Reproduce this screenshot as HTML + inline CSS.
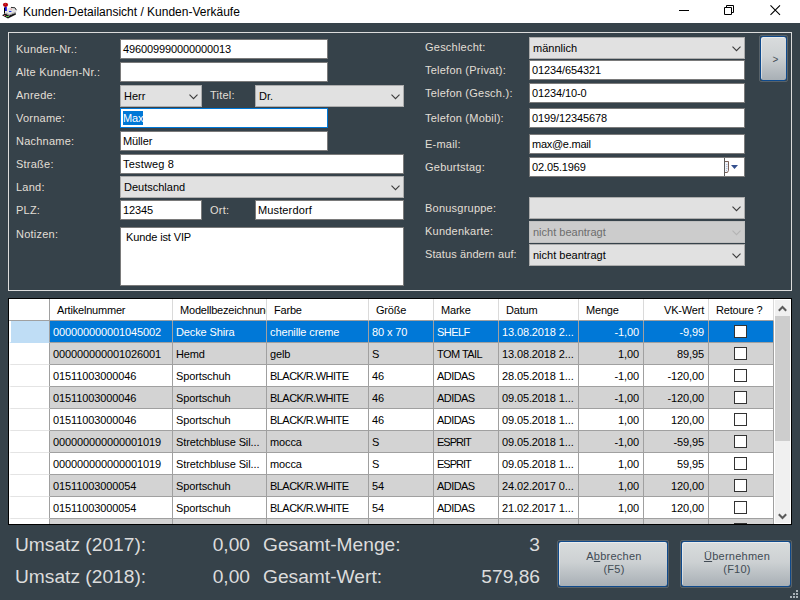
<!DOCTYPE html>
<html lang="de">
<head>
<meta charset="utf-8">
<title>Kunden-Detailansicht / Kunden-Verkäufe</title>
<style>
*{box-sizing:border-box;margin:0;padding:0}
html,body{width:800px;height:600px;overflow:hidden}
body{background:#36424a;font-family:"Liberation Sans",sans-serif;font-size:11px;color:#000;position:relative}
.abs{position:absolute}
#titlebar{position:absolute;left:0;top:0;width:800px;height:23px;background:#fff}
#title{position:absolute;left:23px;top:5px;font-size:12px;line-height:14px;color:#000;white-space:nowrap;letter-spacing:0}
#panel{position:absolute;left:8px;top:32px;width:784px;height:259px;border:1px solid #dcdcdc}
.lbl{position:absolute;color:#e2dfd6;font-size:11px;line-height:13px;white-space:nowrap;letter-spacing:.23px}
.inp{letter-spacing:-.12px;position:absolute;background:#fff;border:1px solid #7a7a7a;height:20px;font-size:11px;line-height:13px;padding:3px 0 0 2px;white-space:nowrap;overflow:hidden}
.cmb{position:absolute;background:#e1e1e1;border:1px solid #adadad;height:22px;font-size:11px;line-height:13px;padding:4px 0 0 3px;white-space:nowrap;overflow:hidden}
.cmb.dis{background:#cccccc;border-color:#bfbfbf;color:#6d6d6d}
.cmb svg{position:absolute;right:3.5px;top:8px}

.btn{position:absolute;border:1px solid #59636a;border-radius:2px}
.btni{position:absolute;left:0;top:0;right:0;bottom:0;border:1px solid #0f4a8c;border-radius:3px;background:linear-gradient(#d9dcdd,#cdd1d3 45%,#a8afb5);box-shadow:inset 1px 1px 0 rgba(255,255,255,.45);text-align:center;color:#414b54;font-size:11px;line-height:13px;letter-spacing:.25px}
.wc{position:absolute;top:0}

#grid{position:absolute;left:8px;top:298px;width:784px;height:227px;border:1px solid #000;background:#fff;overflow:hidden;font-size:11px}
.gh,.gr{height:22px;white-space:nowrap;display:flex}
.c{height:22px;border-right:1px solid #a0a0a0;border-bottom:1px solid #a0a0a0;line-height:13px;padding:5px 0 0 3px;overflow:hidden;white-space:nowrap;flex:none;letter-spacing:-.12px}
.c.u{letter-spacing:-.55px}
.c.u2{letter-spacing:-1px}
.gh .c{padding-left:7px;letter-spacing:-.2px;border-right-color:#dadada}
.gh .c.rh{border-right-color:#a0a0a0}
.c.rh{width:41px;background:#fff}
.gr .c.rh{border-bottom-color:#e4e4e4;border-left:2px solid #fff}
.c.r{text-align:right;padding-right:4px}
.gh .c.r{padding-right:4px}
.gr.alt .c{background:#d3d3d3}
.gr.alt .c.rh{background:#fff}
.gr.sel .c{background:#0078d7;color:#fff}
.gr.sel .c.rh{background:#bfddf5;border-bottom-color:#bfddf5}
.c.cb{padding:4px 0 0 25px;text-align:left}
.c.cb i{display:block;width:13px;height:13px;border:1px solid #333;background:#fff}
#sb{position:absolute;left:765px;top:0;width:17px;height:225px;background:#f0f0f0;border:1px solid #fff}
#thumb{position:absolute;left:0;top:16px;width:15px;height:125px;background:#cdcdcd}
.big{position:absolute;color:#dcdcdc;font-size:19.2px;line-height:22px;white-space:nowrap}
.big.r{text-align:right}
</style>
</head>
<body>
<div id="titlebar">
  <svg class="abs" style="left:0;top:0" width="20" height="22" viewBox="0 0 20 22">
    <path d="M2 15.2 L5 13.5 L15.5 13 L16 14.6 L8 18.4 L7 18 Z" fill="#151515"/>
    <path d="M5 9.5 L11.5 7 L16.5 9.6 L16.3 12.6 L9 15.6 L5 13.2 Z" fill="#e2e2e2"/>
    <path d="M6 12.5 L9.3 14.4 L15.8 11.8 L15.8 12.8 L9.2 15.6 L5.5 13.4 Z" fill="#9a9a9a"/>
    <path d="M11 7.4 L15 7.8 L16.4 10.2" stroke="#2a2a2a" stroke-width="1" fill="none"/>
    <rect x="4.6" y="6.6" width="2.2" height="4.4" fill="#1212d8"/>
    <rect x="4" y="7.6" width="1" height="6" fill="#000"/>
    <ellipse cx="5.5" cy="4.8" rx="2.6" ry="2.1" fill="#b8000c"/>
    <rect x="4.6" y="3.6" width="1.4" height="1" fill="#e24a4a"/>
    <rect x="6" y="16" width="3" height="1" fill="#58b048"/>
    <rect x="4" y="15" width="1.4" height="1" fill="#e06060"/>
    <rect x="9" y="11" width="2.4" height="1" fill="#2436e6"/>
    <rect x="10.6" y="8.6" width="1" height="1" fill="#e06060"/>
  </svg>
  <div id="title">Kunden-Detailansicht / Kunden-Verkäufe</div>
  <svg class="wc" style="left:676px" width="124" height="23" viewBox="0 0 124 23">
    <path d="M3 10.5 H13" stroke="#000" stroke-width="1" fill="none"/>
    <path d="M48.5 7.5 H55.5 V14.5 H48.5 Z M50.5 7.5 V5.5 H57.5 V12.5 H55.5" stroke="#000" stroke-width="1" fill="none"/>
    <path d="M94.5 5.3 L104 14.8 M104 5.3 L94.5 14.8" stroke="#000" stroke-width="1.1" fill="none"/>
  </svg>
</div>
<div id="panel"></div>

<!-- left column -->
<div class="lbl" style="left:16px;top:43px">Kunden-Nr.:</div>
<div class="inp" style="left:120px;top:39px;width:208px">496009990000000013</div>
<div class="lbl" style="left:16px;top:66px">Alte Kunden-Nr.:</div>
<div class="inp" style="left:120px;top:62px;width:208px"></div>
<div class="lbl" style="left:16px;top:89px">Anrede:</div>
<div class="cmb" style="left:120px;top:85px;width:82px">Herr<svg width="9" height="6" viewBox="0 0 9 6"><path d="M0.5 0.6 L4.5 4.6 L8.5 0.6" fill="none" stroke="#3b3b3b" stroke-width="1.1"/></svg></div>
<div class="lbl" style="left:210px;top:89px">Titel:</div>
<div class="cmb" style="left:255px;top:85px;width:149px">Dr.<svg width="9" height="6" viewBox="0 0 9 6"><path d="M0.5 0.6 L4.5 4.6 L8.5 0.6" fill="none" stroke="#3b3b3b" stroke-width="1.1"/></svg></div>
<div class="lbl" style="left:16px;top:112px">Vorname:</div>
<div class="inp" style="left:120px;top:108px;width:208px;border-color:#0078d7"><span style="background:#0078d7;color:#fff;display:inline-block;height:14px;margin-top:-1px;padding-top:1px;line-height:13px">Max</span></div>
<div class="lbl" style="left:16px;top:135px">Nachname:</div>
<div class="inp" style="left:120px;top:131px;width:208px">Müller</div>
<div class="lbl" style="left:16px;top:158px">Straße:</div>
<div class="inp" style="left:120px;top:154px;width:284px;letter-spacing:.18px">Testweg 8</div>
<div class="lbl" style="left:16px;top:181px">Land:</div>
<div class="cmb" style="left:120px;top:176px;width:284px">Deutschland<svg width="9" height="6" viewBox="0 0 9 6"><path d="M0.5 0.6 L4.5 4.6 L8.5 0.6" fill="none" stroke="#3b3b3b" stroke-width="1.1"/></svg></div>
<div class="lbl" style="left:16px;top:204px">PLZ:</div>
<div class="inp" style="left:120px;top:200px;width:82px">12345</div>
<div class="lbl" style="left:210px;top:204px">Ort:</div>
<div class="inp" style="left:255px;top:200px;width:149px;letter-spacing:.13px">Musterdorf</div>
<div class="lbl" style="left:16px;top:228px">Notizen:</div>
<div class="inp" style="left:120px;top:227px;width:284px;height:59px;padding:3px 0 0 5px">Kunde ist VIP</div>

<!-- right column -->
<div class="lbl" style="left:425px;top:41px">Geschlecht:</div>
<div class="cmb" style="left:529px;top:37px;width:216px">männlich<svg width="9" height="6" viewBox="0 0 9 6"><path d="M0.5 0.6 L4.5 4.6 L8.5 0.6" fill="none" stroke="#3b3b3b" stroke-width="1.1"/></svg></div>
<div class="lbl" style="left:425px;top:64px">Telefon (Privat):</div>
<div class="inp" style="left:529px;top:60px;width:216px">01234/654321</div>
<div class="lbl" style="left:425px;top:87px">Telefon (Gesch.):</div>
<div class="inp" style="left:529px;top:83px;width:216px">01234/10-0</div>
<div class="lbl" style="left:425px;top:112px">Telefon (Mobil):</div>
<div class="inp" style="left:529px;top:108px;width:216px">0199/12345678</div>
<div class="lbl" style="left:425px;top:138px">E-mail:</div>
<div class="inp" style="left:529px;top:134px;width:216px;letter-spacing:-.27px">max@e.mail</div>
<div class="lbl" style="left:425px;top:161px">Geburtstag:</div>
<div class="inp" style="left:529px;top:157px;width:216px">02.05.1969
  <div class="abs" style="left:194px;top:0;width:1px;height:18px;background:#5c5c5c"></div>
  <svg class="abs" style="left:195px;top:3px" width="5" height="13" viewBox="0 0 5 13"><path d="M0 0.5 H3.5 V9.6 L2.4 11.5 H0" fill="#eef1f7" stroke="#7a6158" stroke-width="1"/><path d="M1 3.5 H2.5 M1 5.5 H2.5 M1 7.5 H2.5 M1 9.5 H2" stroke="#b4c0d8" stroke-width="1"/></svg>
  <svg class="abs" style="left:201px;top:7px" width="7" height="4" viewBox="0 0 7 4"><path d="M0 0 H7 L3.5 4 Z" fill="#34508e"/></svg>
</div>
<div class="lbl" style="left:425px;top:202px">Bonusgruppe:</div>
<div class="cmb" style="left:529px;top:197px;width:216px"><svg width="9" height="6" viewBox="0 0 9 6"><path d="M0.5 0.6 L4.5 4.6 L8.5 0.6" fill="none" stroke="#3b3b3b" stroke-width="1.1"/></svg></div>
<div class="lbl" style="left:425px;top:225px">Kundenkarte:</div>
<div class="cmb dis" style="left:529px;top:221px;width:216px">nicht beantragt<svg width="9" height="6" viewBox="0 0 9 6"><path d="M0.5 0.6 L4.5 4.6 L8.5 0.6" fill="none" stroke="#b4b4b4" stroke-width="1.1"/></svg></div>
<div class="lbl" style="left:425px;top:248px;letter-spacing:.1px">Status ändern auf:</div>
<div class="cmb" style="left:529px;top:244px;width:216px">nicht beantragt<svg width="9" height="6" viewBox="0 0 9 6"><path d="M0.5 0.6 L4.5 4.6 L8.5 0.6" fill="none" stroke="#3b3b3b" stroke-width="1.1"/></svg></div>

<!-- > button -->
<div class="btn" style="left:759px;top:35px;width:29px;height:47px"><div class="btni"><span style="position:relative;top:16px;left:2px;font-size:10px">&gt;</span></div></div>

<!-- grid -->
<div id="grid">
<div class="gh"><div class="c rh"></div><div class="c" style="width:123px">Artikelnummer</div><div class="c" style="width:94px">Modellbezeichnung</div><div class="c" style="width:102px">Farbe</div><div class="c" style="width:65px">Größe</div><div class="c" style="width:65px">Marke</div><div class="c" style="width:80px">Datum</div><div class="c" style="width:65px">Menge</div><div class="c r" style="width:65px">VK-Wert</div><div class="c" style="width:65px">Retoure ?</div></div>
<div class="gr sel"><div class="c rh"></div><div class="c" style="width:123px">000000000001045002</div><div class="c" style="width:94px">Decke Shira</div><div class="c" style="width:102px">chenille creme</div><div class="c" style="width:65px">80 x 70</div><div class="c u" style="width:65px">SHELF</div><div class="c" style="width:80px">13.08.2018 2...</div><div class="c r" style="width:65px">-1,00</div><div class="c r" style="width:65px">-9,99</div><div class="c cb" style="width:65px"><i></i></div></div>
<div class="gr alt"><div class="c rh"></div><div class="c" style="width:123px">000000000001026001</div><div class="c" style="width:94px">Hemd</div><div class="c" style="width:102px">gelb</div><div class="c" style="width:65px">S</div><div class="c u" style="width:65px">TOM TAIL</div><div class="c" style="width:80px">13.08.2018 2...</div><div class="c r" style="width:65px">1,00</div><div class="c r" style="width:65px">89,95</div><div class="c cb" style="width:65px"><i></i></div></div>
<div class="gr"><div class="c rh"></div><div class="c" style="width:123px">01511003000046</div><div class="c" style="width:94px">Sportschuh</div><div class="c u" style="width:102px">BLACK/R.WHITE</div><div class="c" style="width:65px">46</div><div class="c u" style="width:65px">ADIDAS</div><div class="c" style="width:80px">28.05.2018 1...</div><div class="c r" style="width:65px">-1,00</div><div class="c r" style="width:65px">-120,00</div><div class="c cb" style="width:65px"><i></i></div></div>
<div class="gr alt"><div class="c rh"></div><div class="c" style="width:123px">01511003000046</div><div class="c" style="width:94px">Sportschuh</div><div class="c u" style="width:102px">BLACK/R.WHITE</div><div class="c" style="width:65px">46</div><div class="c u" style="width:65px">ADIDAS</div><div class="c" style="width:80px">09.05.2018 1...</div><div class="c r" style="width:65px">-1,00</div><div class="c r" style="width:65px">-120,00</div><div class="c cb" style="width:65px"><i></i></div></div>
<div class="gr"><div class="c rh"></div><div class="c" style="width:123px">01511003000046</div><div class="c" style="width:94px">Sportschuh</div><div class="c u" style="width:102px">BLACK/R.WHITE</div><div class="c" style="width:65px">46</div><div class="c u" style="width:65px">ADIDAS</div><div class="c" style="width:80px">09.05.2018 1...</div><div class="c r" style="width:65px">1,00</div><div class="c r" style="width:65px">120,00</div><div class="c cb" style="width:65px"><i></i></div></div>
<div class="gr alt"><div class="c rh"></div><div class="c" style="width:123px">000000000000001019</div><div class="c" style="width:94px">Stretchbluse Sil...</div><div class="c" style="width:102px">mocca</div><div class="c" style="width:65px">S</div><div class="c u2" style="width:65px">ESPRIT</div><div class="c" style="width:80px">09.05.2018 1...</div><div class="c r" style="width:65px">-1,00</div><div class="c r" style="width:65px">-59,95</div><div class="c cb" style="width:65px"><i></i></div></div>
<div class="gr"><div class="c rh"></div><div class="c" style="width:123px">000000000000001019</div><div class="c" style="width:94px">Stretchbluse Sil...</div><div class="c" style="width:102px">mocca</div><div class="c" style="width:65px">S</div><div class="c u2" style="width:65px">ESPRIT</div><div class="c" style="width:80px">09.05.2018 1...</div><div class="c r" style="width:65px">1,00</div><div class="c r" style="width:65px">59,95</div><div class="c cb" style="width:65px"><i></i></div></div>
<div class="gr alt"><div class="c rh"></div><div class="c" style="width:123px">01511003000054</div><div class="c" style="width:94px">Sportschuh</div><div class="c u" style="width:102px">BLACK/R.WHITE</div><div class="c" style="width:65px">54</div><div class="c u" style="width:65px">ADIDAS</div><div class="c" style="width:80px">24.02.2017 0...</div><div class="c r" style="width:65px">1,00</div><div class="c r" style="width:65px">120,00</div><div class="c cb" style="width:65px"><i></i></div></div>
<div class="gr"><div class="c rh"></div><div class="c" style="width:123px">01511003000054</div><div class="c" style="width:94px">Sportschuh</div><div class="c u" style="width:102px">BLACK/R.WHITE</div><div class="c" style="width:65px">54</div><div class="c u" style="width:65px">ADIDAS</div><div class="c" style="width:80px">21.02.2017 1...</div><div class="c r" style="width:65px">1,00</div><div class="c r" style="width:65px">120,00</div><div class="c cb" style="width:65px"><i></i></div></div>
<div class="gr alt"><div class="c rh"></div><div class="c" style="width:123px">01511003000054</div><div class="c" style="width:94px">Sportschuh</div><div class="c u" style="width:102px">BLACK/R.WHITE</div><div class="c" style="width:65px">54</div><div class="c u" style="width:65px">ADIDAS</div><div class="c" style="width:80px">21.02.2017 1...</div><div class="c r" style="width:65px">-1,00</div><div class="c r" style="width:65px">-120,00</div><div class="c cb" style="width:65px"><i></i></div></div>
<div id="sb"><svg class="abs" style="left:3px;top:5px" width="9" height="7" viewBox="0 0 9 7"><path d="M0.8 5.8 L4.5 2 L8.2 5.8" fill="none" stroke="#5a5a5a" stroke-width="2"/></svg><div id="thumb"></div><svg class="abs" style="left:3px;top:213px" width="9" height="7" viewBox="0 0 9 7"><path d="M0.8 1.2 L4.5 5 L8.2 1.2" fill="none" stroke="#5a5a5a" stroke-width="2"/></svg></div>
</div>

<!-- bottom -->
<div class="big" style="left:15px;top:534px">Umsatz (2017):</div>
<div class="big r" style="left:150px;width:100px;top:534px">0,00</div>
<div class="big" style="left:263px;top:534px">Gesamt-Menge:</div>
<div class="big r" style="left:440px;width:100px;top:534px">3</div>
<div class="big" style="left:15px;top:566px">Umsatz (2018):</div>
<div class="big r" style="left:150px;width:100px;top:566px">0,00</div>
<div class="big" style="left:263px;top:566px">Gesamt-Wert:</div>
<div class="big r" style="left:440px;width:100px;top:566px">579,86</div>

<div class="btn" style="left:557px;top:540px;width:112px;height:48px"><div class="btni" style="padding:8px 0 0 2px;line-height:13px">A<u>b</u>brechen<br>(F5)</div></div>
<div class="btn" style="left:680px;top:540px;width:112px;height:48px"><div class="btni" style="padding:8px 0 0 2px;line-height:13px"><u>Ü</u>bernehmen<br>(F10)</div></div>
<svg class="abs" style="left:788px;top:588px" width="12" height="12" viewBox="0 0 12 12" fill="#aab2b8"><rect x="8" y="2" width="2" height="2"/><rect x="5" y="5" width="2" height="2"/><rect x="8" y="5" width="2" height="2"/><rect x="2" y="8" width="2" height="2"/><rect x="5" y="8" width="2" height="2"/><rect x="8" y="8" width="2" height="2"/></svg>

</body>
</html>
